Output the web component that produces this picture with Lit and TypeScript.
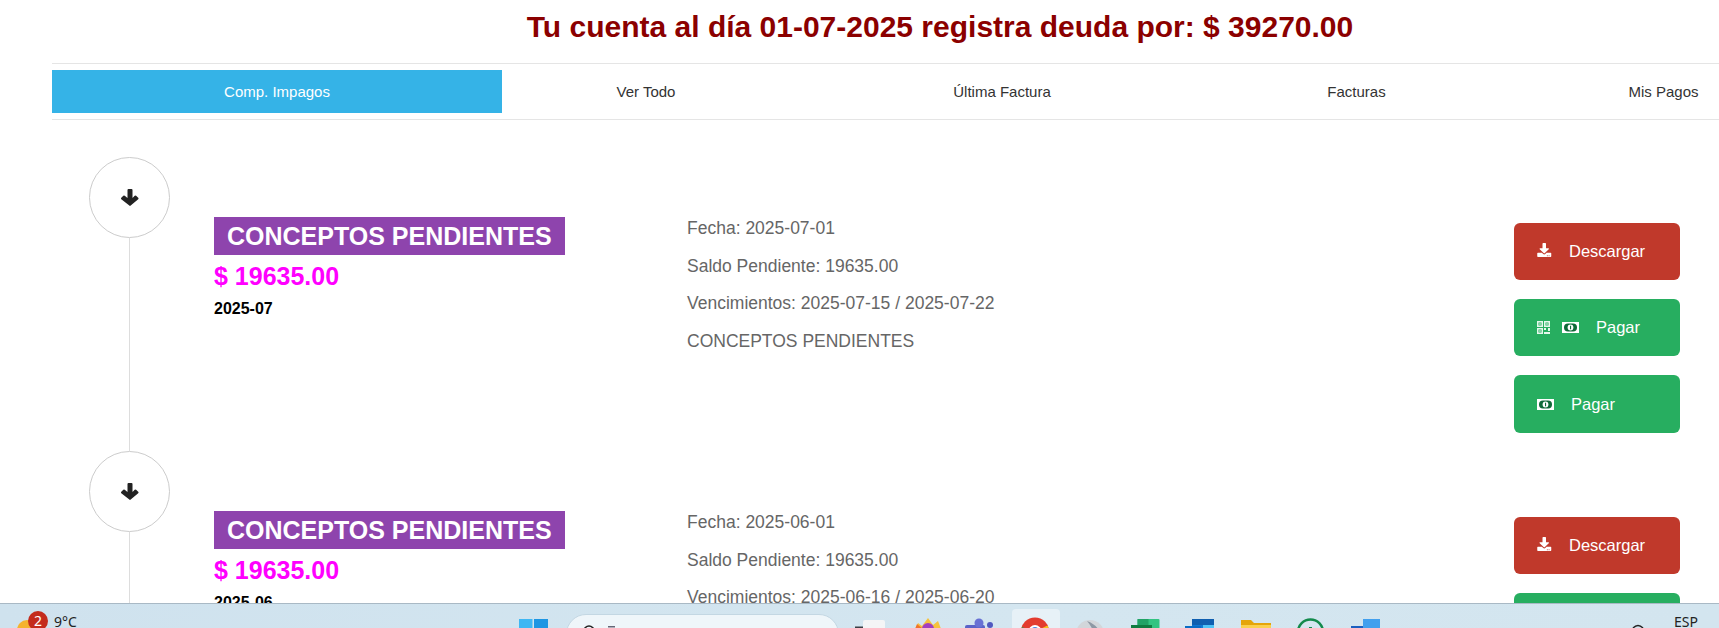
import { LitElement, html, css, svg } from "lit";
import { customElement } from "lit/decorators.js";

const arrowDown = html`<svg class="arrow" viewBox="0 0 18 17" aria-hidden="true"><path fill="#222" d="M6.5 1q0-1 1-1h3q1 0 1 1v8l2.2-2.2q.7-.7 1.4 0l2.1 2q.7.7 0 1.4L9.7 16.6q-.7.7-1.4 0L.3 10.2q-.7-.7 0-1.4l2-2q.7-.7 1.4 0L6.5 9Z"/></svg>`;

const downloadIcon = html`<svg class="i-dl" viewBox="0 0 512 512" aria-hidden="true"><path fill="#fff" d="M216 0h80c13.3 0 24 10.7 24 24v168h87.7c17.8 0 26.7 21.5 14.1 34.1L269.7 378.3c-7.5 7.5-19.8 7.5-27.3 0L90.1 226.1c-12.6-12.6-3.7-34.1 14.1-34.1H192V24c0-13.3 10.7-24 24-24zm296 376v112c0 13.3-10.7 24-24 24H24c-13.3 0-24-10.7-24-24V376c0-13.3 10.7-24 24-24h146.7l49 49c20.1 20.1 52.5 20.1 72.6 0l49-49H488c13.3 0 24 10.7 24 24zm-124 88c0-11-9-20-20-20s-20 9-20 20 9 20 20 20 20-9 20-20zm64 0c0-11-9-20-20-20s-20 9-20 20 9 20 20 20 20-9 20-20z"/></svg>`;

const billIcon = html`<svg class="i-bill" viewBox="0 0 17 11" aria-hidden="true">
  <rect width="17" height="11" fill="#fff"/>
  <rect x="2" y="1.5" width="13" height="8" rx="4" fill="#0f6a38"/>
  <circle cx="8.5" cy="5.5" r="2.9" fill="#fff"/>
  <rect x="8" y="3.7" width="1.1" height="3.6" fill="#0f6a38"/>
</svg>`;

const qrIcon = html`<svg class="i-qr" viewBox="0 0 13 13" aria-hidden="true">
  <g fill="#e6f7ec">
    <path fill-rule="evenodd" d="M0 0h6v6H0zM1.5 1.5v3h3v-3z"/>
    <path fill-rule="evenodd" d="M7 0h6v6H7zM8.5 1.5v3h3v-3z"/>
    <path fill-rule="evenodd" d="M0 7h6v6H0zM1.5 8.5v3h3v-3z"/>
    <rect x="2.3" y="2.3" width="1.4" height="1.4"/>
    <rect x="9.3" y="2.3" width="1.4" height="1.4"/>
    <rect x="2.3" y="9.3" width="1.4" height="1.4"/>
    <path d="M7 7h2v2H7zM11 7h2v3h-2zM7 11h6v2H7z"/>
  </g>
</svg>`;

const tiles = [
  svg`<rect x="16" y="16" width="22" height="20" rx="2" fill="#f4f5f6"/><rect x="8" y="22.5" width="8" height="3" fill="#3a3f44"/>`,
  svg`<path d="M11 30 L16 19 L20 22 L26 14 L31 21 L36 17 L41 30Z" fill="#f7c23c"/><path d="M11 30 L15 20 L21 25 L24 30Z" fill="#f0742c"/><circle cx="26" cy="25" r="6" fill="#a23fc0"/>`,
  svg`<rect x="9" y="21" width="20" height="10" rx="2" fill="#5a63c8"/><circle cx="23" cy="19" r="4.5" fill="#6871d4"/><circle cx="34" cy="21" r="3" fill="#5059c0"/>`,
  svg`<circle cx="24" cy="27.5" r="14" fill="#e33b2e"/><path d="M24 27.5L36.5 21.5A14 14 0 0 1 24 41.5Z" fill="#f5c518"/><path d="M24 27.5L24 41.5A14 14 0 0 1 11 23Z" fill="#2f9e4f"/><circle cx="24" cy="27.5" r="6.5" fill="#fff"/><circle cx="24" cy="27.5" r="4.5" fill="#3f83e8"/>`,
  svg`<circle cx="25" cy="30" r="14" fill="#d2d6da"/><path d="M22 17 Q36 22 38 38 L30 38 Q30 26 22 17Z" fill="#8e98a4"/>`,
  svg`<rect x="17.5" y="15" width="22" height="14" rx="1" fill="#33c481"/><rect x="17.5" y="15" width="11" height="14" fill="#21a366"/><rect x="11" y="21" width="21" height="10" fill="#107c41"/>`,
  svg`<rect x="18" y="15" width="22" height="6" fill="#0f5fb0"/><rect x="18" y="21" width="11" height="10" fill="#0f78d4"/><rect x="29" y="21" width="11" height="10" fill="#4fc3f7"/><rect x="11" y="22" width="16" height="10" fill="#0a6cc4"/>`,
  svg`<path d="M12 16h10l3 3h17v14H12Z" fill="#e5a50a"/><rect x="12" y="21" width="30" height="12" fill="#fbd04e"/>`,
  svg`<circle cx="27.5" cy="28" r="12.5" fill="none" stroke="#128a4c" stroke-width="2.5"/><rect x="26" y="23" width="3" height="3" fill="#128a4c"/>`,
  svg`<path d="M17 22h8v-7h17v18H17Z" fill="#42a0ee"/><path d="M13 22h12v10H13Z" fill="#1c5fc0"/>`,
];

type Row = { date: string; due: string; period: string };
const rows: Row[] = [
  { date: "2025-07-01", due: "2025-07-15 / 2025-07-22", period: "2025-07" },
  { date: "2025-06-01", due: "2025-06-16 / 2025-06-20", period: "2025-06" },
];

@customElement("app-root")
export class AppRoot extends LitElement {
  static styles = css`
    :host {
      display: flex;
      flex-direction: column;
      width: 100vw;
      height: 100vh;
      overflow: hidden;
      background: #fff;
      font-family: "Liberation Sans", Arial, sans-serif;
    }
    .main { flex: 1; min-height: 0; overflow: hidden; }
    .page { width: 1776px; margin-left: 52px; }
    .title {
      margin: 0;
      height: 63px;
      padding-top: 10px;
      box-sizing: border-box;
      text-align: center;
      color: #8b0000;
      font-size: 30px;
      line-height: 34px;
      font-weight: 700;
    }
    .tabs {
      display: grid;
      grid-template-columns: 450px 288px 424px 285px 329px;
      padding: 6px 0;
      border-top: 1px solid #e5e5e5;
      border-bottom: 1px solid #e5e5e5;
    }
    .tab {
      height: 43px;
      display: flex;
      align-items: center;
      justify-content: center;
      font-size: 15px;
      color: #333;
    }
    .tab.active { background: #35b3e7; color: #fff; }
    .timeline { padding: 37px 0 0 37px; }
    .row {
      display: grid;
      grid-template-columns: 81px 517px 827px 166px;
      height: 294px;
    }
    .rail { display: flex; flex-direction: column; align-items: center; }
    .circle {
      flex: none;
      width: 81px;
      height: 81px;
      box-sizing: border-box;
      border: 1px solid #ccc;
      border-radius: 50%;
      display: flex;
      align-items: center;
      justify-content: center;
    }
    .arrow { width: 18px; height: 17px; }
    .line { flex: 1; width: 1px; background: #ddd; }
    .head { padding: 60px 0 0 44px; }
    .tag {
      display: inline-block;
      background: #8e44ad;
      color: #fff;
      font-size: 25px;
      line-height: 38px;
      font-weight: 700;
      padding: 0 13px;
    }
    .amount {
      color: #f0f;
      font-size: 25px;
      line-height: 28px;
      font-weight: 700;
      margin-top: 7px;
    }
    .period {
      color: #000;
      font-size: 16px;
      line-height: 20px;
      font-weight: 700;
      margin-top: 9px;
    }
    .details {
      padding-top: 60px;
      display: flex;
      flex-direction: column;
      gap: 15px;
      color: #666;
      font-size: 17.5px;
      line-height: 22.5px;
    }
    .actions {
      padding-top: 66px;
      display: flex;
      flex-direction: column;
      gap: 19px;
    }
    .btn {
      height: 57px;
      box-sizing: border-box;
      padding-left: 23px;
      border-radius: 6px;
      display: flex;
      align-items: center;
      color: #fff;
      font-size: 16.5px;
    }
    .btn:last-child { height: 58px; }
    .btn.red { background: #c0392b; }
    .btn.green { background: #27ae60; }
    .btn .label { margin-left: 17px; }
    .i-dl { width: 14.5px; height: 14px; margin: 0 0.5px 3px 0; flex: none; }
    .i-bill { width: 17px; height: 11px; flex: none; }
    .i-qr { width: 13px; height: 13px; flex: none; margin-right: 12px; }

    .taskbar {
      flex: none;
      height: 25px;
      box-sizing: border-box;
      border-top: 1px solid #a9b9c5;
      background: linear-gradient(90deg, #cfe2ee, #d4e6f0 60%, #d3e5ef);
      overflow: hidden;
      display: grid;
      grid-template-columns: 519px 47px 273px 8px 545px 1fr;
      color: #222;
      font-family: "Noto Sans", "Open Sans", sans-serif;
      font-size: 14px;
    }
    .weather { position: relative; padding-left: 54px; line-height: 35px; }
    .sun {
      position: absolute;
      left: 17px;
      top: 16px;
      width: 20px;
      height: 20px;
      border-radius: 50%;
      background: #f5b32e;
    }
    .badge {
      position: absolute;
      left: 28px;
      top: 7px;
      width: 20px;
      height: 20px;
      border-radius: 50%;
      background: #c42b1c;
      color: #fff;
      font-size: 14px;
      line-height: 20px;
      text-align: center;
    }
    .win { display: block; width: 29px; height: 24px; }
    .pill {
      margin-top: 10px;
      height: 40px;
      box-sizing: border-box;
      border: 1px solid #c3d7e3;
      border-radius: 20px;
      background: #eff6fa;
      padding: 10px 0 0 15px;
    }
    .mag { display: block; width: 34px; height: 14px; }
    .apps { display: grid; grid-template-columns: repeat(10, 54.5px); }
    .app { position: relative; height: 24px; }
    .app.on::before {
      content: "";
      position: absolute;
      left: 1px;
      top: 5px;
      width: 48px;
      height: 40px;
      border-radius: 4px;
      background: #e7f1f7;
    }
    .app svg { position: relative; display: block; width: 54.5px; height: 24px; }
    .tray { position: relative; padding-left: 282px; line-height: 35px; }
    .tray svg { position: absolute; left: 240px; top: 20px; width: 12px; height: 4px; }
  `;

  private renderRow(r: Row) {
    return html`<div class="row">
      <div class="rail">
        <div class="circle">${arrowDown}</div>
        <div class="line"></div>
      </div>
      <div class="head">
        <div class="tag">CONCEPTOS PENDIENTES</div>
        <div class="amount">$ 19635.00</div>
        <div class="period">${r.period}</div>
      </div>
      <div class="details">
        <div>Fecha: ${r.date}</div>
        <div>Saldo Pendiente: 19635.00</div>
        <div>Vencimientos: ${r.due}</div>
        <div>CONCEPTOS PENDIENTES</div>
      </div>
      <div class="actions">
        <div class="btn red">${downloadIcon}<span class="label">Descargar</span></div>
        <div class="btn green">${qrIcon}${billIcon}<span class="label">Pagar</span></div>
        <div class="btn green">${billIcon}<span class="label">Pagar</span></div>
      </div>
    </div>`;
  }

  render() {
    return html`
      <div class="main">
        <div class="page">
          <h1 class="title">Tu cuenta al día 01-07-2025 registra deuda por: $ 39270.00</h1>
          <nav class="tabs">
            <div class="tab active">Comp. Impagos</div>
            <div class="tab">Ver Todo</div>
            <div class="tab">Última Factura</div>
            <div class="tab">Facturas</div>
            <div class="tab">Mis Pagos</div>
          </nav>
          <div class="timeline">${rows.map((r) => this.renderRow(r))}</div>
        </div>
      </div>
      <footer class="taskbar">
        <div class="weather">
          <span class="sun"></span><span class="badge">2</span>9°C
        </div>
        <svg class="win" viewBox="0 0 29 24" aria-hidden="true">
          <rect x="0" y="15" width="13.5" height="14" fill="#3fb7f3"/>
          <rect x="15" y="15" width="14" height="14" fill="#1d96e3"/>
        </svg>
        <div class="pill">
          <svg class="mag" viewBox="0 0 34 14" aria-hidden="true">
            <circle cx="7" cy="6" r="5" fill="none" stroke="#222" stroke-width="1.6"/>
            <rect x="26" y="1" width="7" height="1.5" fill="#667"/>
          </svg>
        </div>
        <div></div>
        <div class="apps">
          ${tiles.map(
            (t, i) => html`<div class="app ${i === 3 ? "on" : ""}">
              <svg viewBox="0 0 54.5 24" aria-hidden="true">${t}</svg>
            </div>`
          )}
        </div>
        <div class="tray">
          <svg viewBox="0 0 12 4" aria-hidden="true"><path d="M1 4 Q6 -1 11 4" fill="none" stroke="#222" stroke-width="1.5"/></svg>
          ESP
        </div>
      </footer>
    `;
  }
}
